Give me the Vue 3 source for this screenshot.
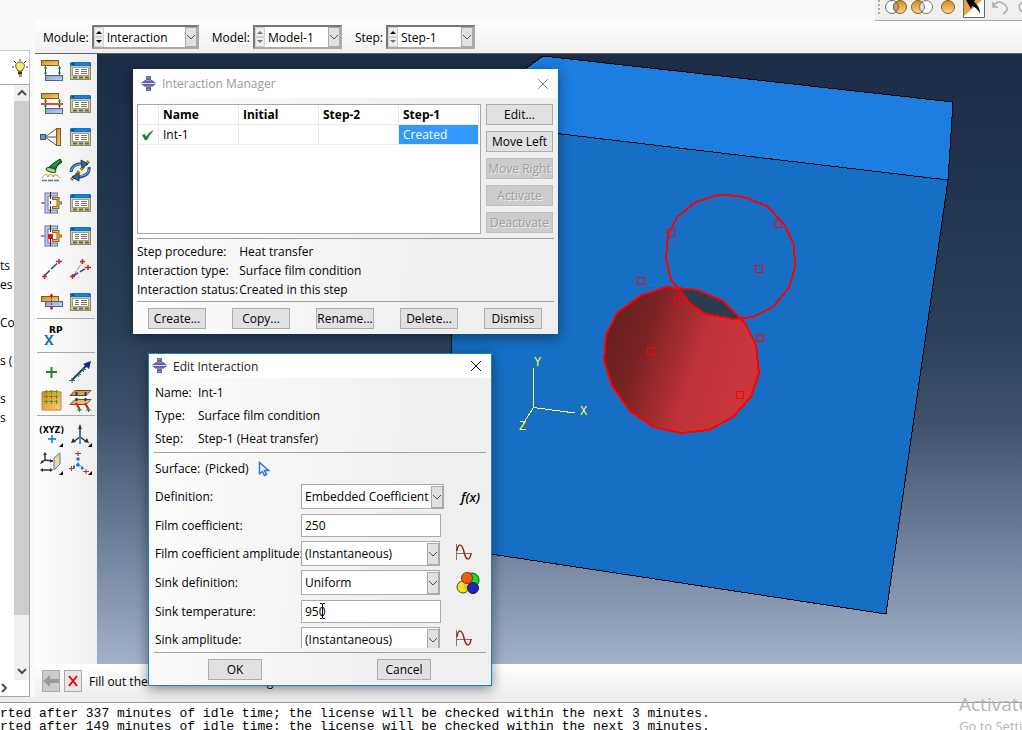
<script setup>
import { ref } from 'vue'

const contexts = [
  { id: 'module', label: 'Module:', value: 'Interaction', size: 'wide', up: true, down: true },
  { id: 'model', label: 'Model:', value: 'Model-1', size: 'slim', up: false, down: false },
  { id: 'step', label: 'Step:', value: 'Step-1', size: 'slim', up: true, down: false }
]

const tree = ['', '', '', '', '', '', '', '', '', 'ts', 'es', '', 'Co', '', 's (', '', 's', 's']

const toolGroups = [
  {
    size: 'tall',
    tools: [
      ['interaction', 'Create Interaction'], ['table', 'Interaction Manager'],
      ['property', 'Create Interaction Property'], ['table', 'Interaction Property Manager'],
      ['constraint', 'Create Constraint'], ['table', 'Constraint Manager'],
      ['contact', 'Find Contact Pairs'], ['cycle', 'Contact Controls'],
      ['connector', 'Create Connector Section'], ['table', 'Connector Section Manager'],
      ['assign', 'Create Connector Assignment'], ['table', 'Connector Assignment Manager'],
      ['wire', 'Create Wire Feature'], ['wires', 'Modify Feature'],
      ['fastener', 'Create Fasteners'], ['table', 'Fastener Manager']
    ]
  },
  { size: 'single', tools: [['rp', 'Create Reference Point']] },
  {
    size: 'short',
    tools: [
      ['plus', 'Create Attachment Points'], ['along', 'Attachment Points Along Direction'],
      ['pattern', 'Attachment Points Pattern'], ['project', 'Project Points']
    ]
  },
  {
    size: 'short',
    tools: [
      ['xyz', 'Create Datum Point'], ['csys', 'Create Datum CSYS'],
      ['plane', 'Create Datum Plane'], ['points', 'Create Datum Axis']
    ]
  }
]

const sideButtons = [
  ['Edit...', false], ['Move Left', false], ['Move Right', true], ['Activate', true], ['Deactivate', true]
]
const facts = [
  ['Step procedure:', 'Heat transfer'],
  ['Interaction type:', 'Surface film condition'],
  ['Interaction status:', 'Created in this step']
]
const managerActions = ['Create...', 'Copy...', 'Rename...', 'Delete...', 'Dismiss']

const summary = [
  ['Name:', 'Int-1'], ['Type:', 'Surface film condition'], ['Step:', 'Step-1 (Heat transfer)']
]
const fields = ref([
  { id: 'definition', label: 'Definition:', kind: 'select', value: 'Embedded Coefficient', icon: 'fx', hint: 'Create expression field' },
  { id: 'film', label: 'Film coefficient:', kind: 'text', value: '250' },
  { id: 'filmamp', label: 'Film coefficient amplitude:', kind: 'select', value: '(Instantaneous)', icon: 'wave', hint: 'Create amplitude' },
  { id: 'sinkdef', label: 'Sink definition:', kind: 'select', value: 'Uniform', icon: 'spheres', hint: 'Create analytical field' },
  { id: 'sinktemp', label: 'Sink temperature:', kind: 'text', value: '950', cursor: true },
  { id: 'sinkamp', label: 'Sink amplitude:', kind: 'select', value: '(Instantaneous)', icon: 'wave', hint: 'Create amplitude' }
])

const handles = [[671, 233], [778, 224], [759, 269], [641, 281], [678, 301], [651, 351], [760, 338], [740, 395]]
const messages = [
  'rted after 337 minutes of idle time; the license will be checked within the next 3 minutes.',
  'rted after 149 minutes of idle time; the license will be checked within the next 3 minutes.'
]
</script>

<template>
  <div class="app">
    <svg class="defs" aria-hidden="true">
      <defs>
        <linearGradient id="orange" x1="0" y1="0" x2="1" y2="1">
          <stop offset="0" stop-color="#d98412" /><stop offset="1" stop-color="#fbd083" />
        </linearGradient>
        <linearGradient id="ball" x1="0" y1="0" x2="0" y2="1">
          <stop offset="0" stop-color="#d98717" /><stop offset="1" stop-color="#ffd58c" />
        </linearGradient>
        <linearGradient id="steel" x1="0" y1="0" x2="1" y2="1">
          <stop offset="0" stop-color="#7f9fd8" /><stop offset="1" stop-color="#c8d6f3" />
        </linearGradient>
      </defs>
      <symbol id="chevron" viewBox="0 0 10 22">
        <path d="M1 9l4 4 4-4" fill="none" stroke="#505050" />
      </symbol>
      <symbol id="logo" viewBox="0 0 16 16">
        <path d="M5 0h5v4h1l4 3H0l4-3h1zM0 8h15l-4 3h-1v4H5v-4H4z" fill="#66669f" />
        <path d="M6 1.500h3M5 4.500h5M4 10.500h7M6 13.500h3" stroke="#9292bd" />
        <path d="M0 7.500h15" stroke="#dadaea" />
      </symbol>
      <symbol id="table" viewBox="0 0 24 24">
        <rect x="2.500" y="6.500" width="20" height="14" fill="#cfcaa2" stroke="#8c8860" />
        <path d="M2 7V4l1-1h19l1 1v3z" fill="#0874d0" />
        <path d="M4 5h2" stroke="#0b315c" /><path d="M7 5h14" stroke="#2a8ee6" />
        <rect x="4.500" y="8.500" width="16" height="8" fill="#fff" stroke="#a5a17d" />
        <path d="M7 10.500h4M13 10.500h6M7 12.500h4M13 12.500h6M7 14.500h4M13 14.500h6" stroke="#777" />
        <path d="M5 18.500h4M11 18.500h4M17 18.500h4" stroke="#6a6540" stroke-width="2" />
      </symbol>
      <symbol id="interaction" viewBox="0 0 24 24">
        <path d="M6.500 7v10M20.500 7v10" stroke="#333" />
        <path d="M5 9h3M5 14h3M19 9h3M19 14h3M6.500 7v3M6.500 13v3M20.500 7v3M20.500 13v3" stroke="#16821f" />
        <rect x="2.500" y="1.500" width="17" height="5" fill="url(#orange)" stroke="#7a5a2c" />
        <rect x="6.500" y="16.500" width="17" height="5" fill="url(#steel)" stroke="#55617e" />
      </symbol>
      <symbol id="property" viewBox="0 0 24 24">
        <use href="#interaction" />
        <path d="M2 12h22" stroke="#e2492f" stroke-width="2" />
      </symbol>
      <symbol id="constraint" viewBox="0 0 24 24">
        <path d="M17 4L6 12l11 8M6 12h11" fill="none" stroke="#555" />
        <rect x="1.500" y="9.500" width="5" height="5" fill="#6f91d0" stroke="#3d5280" />
        <rect x="17.500" y="3.500" width="4" height="17" fill="url(#orange)" stroke="#7a5a2c" />
      </symbol>
      <symbol id="contact" viewBox="0 0 24 24">
        <path d="M15 5l6-4 2 3-5 4-2 5-7-3z" fill="#168028" stroke="#0b3b17" />
        <path d="M14 8l6-5" stroke="#5cb95c" />
        <ellipse cx="12" cy="12" rx="5" ry="2" fill="#a9dc95" stroke="#124d1c" transform="rotate(15 12 12)" />
        <path d="M3 20q4-7 7-1M8 19q4-5 7 0M13 19q4-5 8 1" fill="none" stroke="#e89314" />
        <path d="M3 22.500h18" fill="none" stroke="#2588ca" stroke-width="1.500" stroke-dasharray="5 1" />
      </symbol>
      <symbol id="cycle" viewBox="0 0 24 24">
        <path d="M3 22L22 2" stroke="#946a14" stroke-width="3" stroke-dasharray="5 2" />
        <path d="M3 22L22 2" stroke="#f0bd4b" stroke-dasharray="5 2" />
        <path d="M3 14C3 9 8 5 15 6M21 9c1 6-4 10-11 10" fill="none" stroke="#2b568b" stroke-width="3" />
        <path d="M3 13C4 9 9 6 14 6M21 11c0 4-4 7-9 7" fill="none" stroke="#91b5d8" />
        <path d="M13 2l7 4-6 4zM11 15l-7 4 7 4z" fill="#3a679b" stroke="#1c3963" />
      </symbol>
      <symbol id="connector" viewBox="0 0 24 24">
        <path d="M19 3.500H7.500v17H19" fill="none" stroke="#65759b" stroke-width="4" />
        <path d="M18 3.500H7.500v17H18" fill="none" stroke="#bccdf0" stroke-width="2" />
        <path d="M2 12h4" stroke="#7b8cb5" stroke-width="2" />
        <path d="M13 7.500h6v9h-6M19 12h4" fill="none" stroke="#94661f" stroke-width="3" />
        <path d="M14 7.500h5v9h-5M19 12h3" fill="none" stroke="#f5b95c" />
        <path d="M11.500 1v22" stroke="#333" stroke-dasharray="7 2 3 2" />
      </symbol>
      <symbol id="assign" viewBox="0 0 24 24">
        <use href="#connector" /><path d="M9 10h5v5H9z" fill="#e01616" />
      </symbol>
      <symbol id="wire" viewBox="0 0 24 24">
        <path d="M5 19L20 4.500" stroke="#36369b" stroke-width="1.500" stroke-dasharray="8 2" />
        <path d="M3 19.500h5M5.500 17v5M17 4.500h6M20 2v5" stroke="#d52222" stroke-width="1.500" />
      </symbol>
      <symbol id="wires" viewBox="0 0 24 24">
        <path d="M5 19l9.500-14" stroke="#8a8ad0" stroke-dasharray="6 1" /><path d="M5 19l15-9" stroke="#36369b" stroke-width="1.500" stroke-dasharray="6 2" />
        <path d="M2 19.500h5M4.500 17v5M12 4.500h5M14.500 2v5M17 10.500h6M20 8v5" stroke="#d52222" stroke-width="1.500" />
      </symbol>
      <symbol id="fastener" viewBox="0 0 24 24">
        <rect x="2.500" y="6.500" width="17" height="5" fill="url(#orange)" stroke="#7a5a2c" />
        <rect x="6.500" y="11.500" width="17" height="5" fill="url(#steel)" stroke="#55617e" />
        <path d="M12.500 4v15" stroke="#c51c16" stroke-dasharray="2 1" />
        <circle cx="12.500" cy="5.500" r="1.500" fill="#e11" /><circle cx="12.500" cy="18" r="1.500" fill="#e11" />
      </symbol>
      <symbol id="rp" viewBox="0 0 24 24">
        <path d="M7 12l6 8M13 12l-6 8" stroke="#0870d5" stroke-width="2" />
        <path d="M5.500 11.500h3M11.500 11.500h3M5.500 20.500h3M11.500 20.500h3" stroke="#0870d5" />
      </symbol>
      <symbol id="plus" viewBox="0 0 24 24">
        <path d="M7 12h11M12.500 7v11" stroke="#188b20" stroke-width="2" />
      </symbol>
      <symbol id="along" viewBox="0 0 24 24">
        <path d="M4 20L20 4" stroke="#17309d" stroke-width="2" />
        <path d="M23 1l-2 8-6-5z" fill="#0b2795" />
        <path d="M1 20.500h6M4 18v5M8 14.500h5M10.500 12v5M13 9.500h5M15.500 7v5" stroke="#168c23" />
      </symbol>
      <symbol id="pattern" viewBox="0 0 24 24">
        <path d="M3 4q9-2 19 0v18H3z" fill="url(#orange)" stroke="#bd8430" />
        <path d="M5 3.500h4M10 3.500h4M15 3.500h4M5 8.500h4M10 8.500h4M15 8.500h4M5 13.500h4M10 13.500h4M15 13.500h4M7.500 2v4M12.500 2v4M17.500 2v4M7.500 7v4M12.500 7v4M17.500 7v4M7.500 12v4M12.500 12v4M17.500 12v4" stroke="#4f9a1c" />
      </symbol>
      <symbol id="project" viewBox="0 0 24 24">
        <path d="M7 2.500h16l-5 5H2zM7 11.500h16l-5 5H2z" fill="url(#orange)" stroke="#615032" />
        <path d="M8.500 4v9M17.500 4v9" stroke="#16309b" stroke-width="2" stroke-dasharray="4 2" />
        <path d="M8 15l4 7M17 15l4 7" stroke="#d91818" stroke-width="2" />
        <path d="M9 22h5M11.500 20v4M18 22h5M20.500 20v4" stroke="#168c23" />
      </symbol>
      <symbol id="xyz" viewBox="0 0 24 24">
        <path d="M9 16h8M13 12v8" stroke="#0874d8" stroke-width="1.500" />
        <path d="M24 20v4h-4z" />
      </symbol>
      <symbol id="csys" viewBox="0 0 24 24">
        <path d="M12 3v12M12 14l-7 5M12 14l7 5" stroke="#333" stroke-width="1.500" />
        <path d="M12 4v17" stroke="#237dc1" stroke-width="1.500" />
        <path d="M12 1l2 5h-4zM3 20l2-5 3 4zM21 20l-2-5-3 4z" fill="#333" />
        <path d="M24 20v4h-4z" />
      </symbol>
      <symbol id="plane" viewBox="0 0 24 24">
        <path d="M6 3v6l8 1M6 9l-4 3M3 19h10" fill="none" stroke="#333" stroke-width="1.500" />
        <path d="M6 1l2 3H4zM14 10l-3-2v4zM1 13l2-4 2 2zM1 19l3-2v4zM14 19l-3-2v4z" fill="#333" />
        <path d="M15 7l6-5v11l-6 6z" fill="#ffd78c" stroke="#347fbb" />
        <path d="M24 20v4h-4z" />
      </symbol>
      <symbol id="points" viewBox="0 0 24 24">
        <path d="M10 3v10l8 6M10 13l-6 4" fill="none" stroke="#4a8fcb" stroke-dasharray="2 2" />
        <path d="M7 2.500h6M10 0v5M1 17.500h5M3.500 15v5M15 20.500h6M18 18v5" stroke="#d42222" />
        <path d="M8.500 8h3M8.500 14h3M5 16h2M13 17h2" stroke="#0870d5" stroke-width="3" />
        <path d="M24 20v4h-4z" />
      </symbol>
      <symbol id="wave" viewBox="0 0 20 20">
        <path d="M2.500 2v16M2 11.500h16" stroke="#777" />
        <path d="M3 9C4 1 8 1 10 10s6 9 7 1" fill="none" stroke="#a61f26" stroke-width="1.500" />
      </symbol>
      <symbol id="spheres" viewBox="0 0 24 24">
        <circle cx="16" cy="9" r="7" fill="#14dc2a" stroke="#173f18" />
        <circle cx="7" cy="16" r="6" fill="#eee32b" stroke="#4e4a17" />
        <path d="M7 11h8v9H9z" fill="#d8cd28" />
        <circle cx="11" cy="7" r="5.500" fill="#f15c10" stroke="#793513" />
        <circle cx="17" cy="17" r="5.500" fill="#2028b5" stroke="#17194c" />
      </symbol>
    </svg>

    <div class="workspace">
      <aside class="model-tree">
        <div class="tip">
          <button type="button" aria-label="Show tips">
            <svg width="16" height="18" viewBox="0 0 16 18">
              <path d="M8 0v2M2 2l2 2M14 2l-2 2M0 8h2M14 8h2" stroke="#333" />
              <path d="M8 3C3 3 3 8 5 10l1 2h4l1-2c3-3 1-7-3-7z" fill="#ffe879" stroke="#5e5718" />
              <path d="M6 12.500h4v3H6z" fill="#353b1c" /><path d="M7 17h3" stroke="#222" />
            </svg>
          </button>
        </div>
        <div class="tree-body">
          <ul><li v-for="(item, i) in tree" :key="i">{{ item }}</li></ul>
          <div class="scroll">
            <svg viewBox="0 0 15 16"><path d="M4 10l4-4 4 4" fill="none" stroke="#505050" stroke-width="2" /></svg>
            <div class="thumb"></div><div class="track"></div>
            <svg viewBox="0 0 15 16"><path d="M4 5l4 4 4-4" fill="none" stroke="#505050" stroke-width="2" /></svg>
          </div>
        </div>
        <div class="tree-foot">
          <svg width="12" height="16" viewBox="0 0 12 16"><path d="M2 4l4 4-4 4" fill="none" stroke="#505050" stroke-width="2" /></svg>
        </div>
      </aside>

      <main>
        <div class="top-strip">
          <div class="display-tools">
            <svg class="grip" width="5" height="20" viewBox="0 0 5 20"><path d="M2 0v14" stroke="#aaa" stroke-width="2" stroke-dasharray="2 2" /></svg>
            <button type="button" aria-label="Remove selected">
              <svg width="24" height="20" viewBox="0 0 24 20">
                <circle cx="8" cy="7" r="6.500" fill="#fff" stroke="#666" /><circle cx="16" cy="7" r="6.500" fill="url(#ball)" stroke="#776140" />
                <path d="M12 2q5 5 0 10q-5-5 0-10" fill="#cda050" stroke="#666" />
              </svg>
            </button>
            <button type="button" aria-label="Replace selected">
              <svg width="24" height="20" viewBox="0 0 24 20">
                <circle cx="8" cy="7" r="6.500" fill="url(#ball)" stroke="#776140" /><circle cx="16" cy="7" r="6.500" fill="#fff" stroke="#777" />
                <path d="M12 2q5 5 0 10q-5-5 0-10" fill="#e2e2e2" stroke="#777" />
              </svg>
            </button>
            <button type="button" aria-label="Replace all">
              <svg width="24" height="20" viewBox="0 0 24 20"><circle cx="12" cy="7" r="6.500" fill="url(#ball)" stroke="#776140" /></svg>
            </button>
            <button type="button" aria-label="Undo display change">
              <svg width="24" height="20" viewBox="0 0 24 20">
                <path d="M1 0h22v18H1z" fill="#fff" /><path d="M1 0h19L1 17z" fill="#e7a243" />
                <path d="M1.500 0v17.500h21V0" fill="none" stroke="#666" />
                <path d="M4 0h9l-1 2q6 4 6 12-3-7-8-8l-1 3z" />
              </svg>
            </button>
            <button type="button" aria-label="Undo">
              <svg width="24" height="20" viewBox="0 0 24 20"><path d="M5 2v5h5M5 7q4-8 11-3t-1 10" fill="none" stroke="#aaa" stroke-width="1.500" /></svg>
            </button>
            <button type="button" aria-label="Redo">
              <svg width="24" height="20" viewBox="0 0 24 20"><path d="M12 1Q3 3 6 10l4 4" fill="none" stroke="#aaa" stroke-width="1.500" /></svg>
            </button>
          </div>
        </div>

        <div class="context">
          <div v-for="c in contexts" :key="c.id" class="context-item">
            <label :for="c.id">{{ c.label }}</label>
            <div class="combo context-combo" :class="c.size">
              <svg class="spin" width="10" height="20" viewBox="0 0 10 20">
                <path d="M.500.500h9v9h-9zM.500 10.500h9v9h-9z" fill="#eee" stroke="#d0d0d0" />
                <path d="M5 4L2 7h6z" :fill="c.up ? '#000' : '#777'" /><path d="M5 16l-3-3h6z" :fill="c.down ? '#000' : '#777'" />
              </svg>
              <select :id="c.id"><option>{{ c.value }}</option></select>
              <span class="arrow"><svg width="10" height="22"><use href="#chevron" /></svg></span>
            </div>
          </div>
        </div>

        <div class="stage">
          <nav class="toolbox" aria-label="Toolbox">
            <div v-for="(group, g) in toolGroups" :key="g" class="group" :class="group.size">
              <button v-for="(tool, t) in group.tools" :key="t" type="button" :aria-label="tool[1]" :title="tool[1]">
                <svg width="24" height="24"><use :href="'#' + tool[0]" /></svg>
                <span v-if="tool[0] === 'rp'" class="rp-text">RP</span>
                <span v-if="tool[0] === 'xyz'" class="xyz-text">(XYZ)</span>
              </button>
            </div>
          </nav>
          <div class="viewport">
            <svg viewBox="97 54 925 610" preserveAspectRatio="xMinYMin slice" role="img" aria-label="Part with picked surface">
              <defs>
                <linearGradient id="hole" gradientUnits="userSpaceOnUse" x1="610" y1="335" x2="740" y2="380">
                  <stop offset="0" stop-color="#692022" /><stop offset=".25" stop-color="#7b2224" />
                  <stop offset=".65" stop-color="#be3238" /><stop offset="1" stop-color="#c9363b" />
                </linearGradient>
              </defs>
              <path d="M543 56L953 102L948 180L452 121z" fill="#1b7ee0" stroke="#000" />
              <path d="M452 121L948 180L886 614L451 548z" fill="#166fc4" stroke="#000" />
              <path d="M666 287L698 290L723 301L745 323L756 345L759 373L751 397L733 417L709 430L681 433L654 427L630 411L612 386L604 360L606 335L617 313L640 296z" fill="url(#hole)" />
              <path d="M677 288L698 290L723 301L738 318L733 319L705 314L690 303z" fill="#293d52" />
              <g fill="none" stroke="#f00" stroke-width="2">
                <path d="M666 287L698 290L723 301L745 323L756 345L759 373L751 397L733 417L709 430L681 433L654 427L630 411L612 386L604 360L606 335L617 313L640 296z" />
                <path d="M718 195L727 195L744 197L767 206L784 224L794 245L795 267L789 288L773 307L753 317L733 319L705 314L690 303L677 287L671 280L666 259L668 235L677 217L696 202z" />
              </g>
              <path v-for="(h, i) in handles" :key="i" :d="`M${h[0] - 3.5} ${h[1] - 3.5}h7v7h-7z`" fill="none" stroke="#f00" />
              <path d="M533.500 368v39.500L575 413M533.500 407.500L523 424" fill="none" stroke="#ffff70" />
              <g class="triad"><text x="534" y="366">Y</text><text x="580" y="415">X</text><text x="519" y="430">Z</text></g>
            </svg>
          </div>
        </div>

        <div class="prompt">
          <button type="button" class="back" disabled aria-label="Previous">
            <svg width="16" height="16" viewBox="0 0 16 16"><path d="M0 8l7-6v4h9v4H7v4z" fill="#9a9a9a" /></svg>
          </button>
          <button type="button" aria-label="Cancel procedure">
            <svg width="14" height="16" viewBox="0 0 14 16"><path d="M3 3l8 10M11 3L3 13" stroke="#f00000" stroke-width="2" /></svg>
          </button>
          <span>Fill out the Edit Interaction dialog</span>
        </div>
      </main>
    </div>

    <section class="messages"><p v-for="m in messages" :key="m">{{ m }}</p></section>

    <section class="dialog manager" role="dialog" aria-label="Interaction Manager">
      <header>
        <svg width="16" height="16"><use href="#logo" /></svg>
        <h2>Interaction Manager</h2>
        <button type="button" aria-label="Close"><svg width="12" height="12" viewBox="0 0 12 12"><path d="M1 1l10 10M11 1L1 11" stroke="#888" /></svg></button>
      </header>
      <div class="manager-main">
        <div class="list">
          <table>
            <thead><tr><th class="mark"></th><th>Name</th><th>Initial</th><th>Step-2</th><th>Step-1</th></tr></thead>
            <tbody>
              <tr>
                <td class="mark"><svg width="14" height="12" viewBox="0 0 14 12"><path d="M1 6l3-1 1 3q3-5 8-7-4 4-7 10H4z" fill="#078a13" /></svg></td>
                <td>Int-1</td><td></td><td></td><td class="picked">Created</td>
              </tr>
            </tbody>
          </table>
        </div>
        <div class="side">
          <button v-for="b in sideButtons" :key="b[0]" type="button" class="push" :disabled="b[1]">{{ b[0] }}</button>
        </div>
      </div>
      <dl class="facts">
        <template v-for="f in facts" :key="f[0]"><dt>{{ f[0] }}</dt><dd>{{ f[1] }}</dd></template>
      </dl>
      <footer><button v-for="a in managerActions" :key="a" type="button" class="push">{{ a }}</button></footer>
    </section>

    <section class="dialog editor" role="dialog" aria-label="Edit Interaction">
      <header>
        <svg width="16" height="16"><use href="#logo" /></svg>
        <h2>Edit Interaction</h2>
        <button type="button" aria-label="Close"><svg width="12" height="12" viewBox="0 0 12 12"><path d="M1 1l10 10M11 1L1 11" stroke="#111" /></svg></button>
      </header>
      <dl class="summary">
        <template v-for="s in summary" :key="s[0]"><dt>{{ s[0] }}</dt><dd>{{ s[1] }}</dd></template>
      </dl>
      <div class="surface">
        <span>Surface:</span><span>(Picked)</span>
        <button type="button" aria-label="Edit region">
          <svg width="12" height="16" viewBox="0 0 12 16"><path d="M1.500 1.500v11l3-2 2 4 2-1-2-4h4z" fill="#fff" stroke="#2b6ff0" stroke-width="1.500" /></svg>
        </button>
      </div>
      <form class="fields" @submit.prevent>
        <div v-for="f in fields" :key="f.id" class="field" :class="f.kind">
          <label :for="f.id">{{ f.label }}</label>
          <div v-if="f.kind === 'select'" class="combo" :class="{ broad: f.id === 'definition' }">
            <select :id="f.id"><option>{{ f.value }}</option></select>
            <span class="arrow"><svg width="10" height="22"><use href="#chevron" /></svg></span>
          </div>
          <div v-else class="entry">
            <input :id="f.id" v-model="f.value" type="text">
            <svg v-if="f.cursor" class="caret" width="7" height="16" viewBox="0 0 7 16"><path d="M1 .500h2l.500 1 .500-1h2M3.500 1v14M1 15.500h2l.500-1 .500 1h2" fill="none" stroke="#000" /></svg>
          </div>
          <button v-if="f.icon" type="button" class="helper" :aria-label="f.hint">
            <span v-if="f.icon === 'fx'">f(x)</span>
            <svg v-else :class="f.icon"><use :href="'#' + f.icon" /></svg>
          </button>
        </div>
      </form>
      <footer><button type="button" class="push">OK</button><button type="button" class="push">Cancel</button></footer>
    </section>

    <div class="watermark"><strong>Activate Windows</strong><span>Go to Settings to activate Windows.</span></div>
  </div>
</template>

<style>
body { margin: 0; overflow: hidden; }
</style>

<style scoped>
* { box-sizing: border-box; }
.app {
  position: relative; display: flex; flex-direction: column; height: 100vh; overflow: hidden;
  background: #f4f4f4; color: #000; font: 12px/19px "Open Sans", "Noto Sans", sans-serif;
}
.defs { position: absolute; width: 0; height: 0; }
button { display: flex; align-items: center; justify-content: center; margin: 0; padding: 0; border: 0; background: none; color: inherit; font: inherit; }
input, select { min-width: 0; margin: 0; border: 0; border-radius: 0; outline: 0; background: #fff; color: #000; font: inherit; }
select { flex: 1; height: 100%; padding: 0 0 0 3px; appearance: none; }
h2, p, ul, dl, dd { margin: 0; padding: 0; }
h2 { font: inherit; }

.workspace { flex: 1; min-height: 0; display: grid; grid-template-columns: 35px 1fr; }
.model-tree { display: flex; flex-direction: column; min-height: 0; padding: 50px 5px 0 0; background: #fafafa; }
.tip { display: flex; justify-content: flex-end; height: 34px; flex: none; border: solid #c8c8c8; border-width: 1px 1px 0 0; background: #fff; }
.tip button { width: 18px; }
.tree-body { flex: 1; min-height: 0; display: flex; justify-content: space-between; border: solid #a5a8ae; border-width: 1px 1px 0 0; background: #fff; overflow: hidden; }
ul { flex: 1; list-style: none; white-space: nowrap; }
li { width: 14px; height: 19px; }
.scroll { position: relative; width: 15px; display: flex; flex-direction: column; background: #f0f0f0; }
.scroll svg { flex: none; height: 16px; }
.thumb { flex: 21; background: #cdcdcd; }
.track { flex: 2; }
.tree-foot { flex: none; display: flex; align-items: center; height: 17px; border: solid #a5a8ae; border-width: 0 1px 1px 0; background: #fff; }

main { min-width: 0; display: flex; flex-direction: column; }
.top-strip { height: 21px; flex: none; display: flex; justify-content: flex-end; background: #fafafa; }
.display-tools { width: 147px; display: flex; padding-left: 2px; overflow: hidden; border-bottom: 1px solid #aaa; background: #f0f0f0; }
.display-tools > * { flex: none; }
.display-tools button { width: 26px; justify-content: flex-start; }
.grip { margin-right: 2px; }
.context { height: 33px; flex: none; display: flex; align-items: center; gap: 13px; padding: 0 8px; border-bottom: 1px solid #666; background: linear-gradient(#fff, #efefef); }
.context-item { display: flex; align-items: center; gap: 3px; }
.combo { display: flex; align-items: center; width: 139px; height: 25px; border: 1px solid #a9a9ae; background: #fff; }
.combo.broad { width: 143px; }
.context-combo { height: 24px; border: 2px solid #aaa; border-top-color: #777; border-left-color: #777; }
.combo.wide { width: 107px; }
.combo.slim { width: 89px; }
.spin { flex: none; }
.arrow { flex: none; display: flex; width: 12px; height: 22px; border: 1px solid #aaa; background: #e1e1e1; overflow: hidden; pointer-events: none; align-items: center; }
.context-combo .arrow { height: 20px; }

.stage { flex: 1; min-height: 0; display: flex; }
.toolbox { flex: none; width: 62px; padding-left: 2px; background: linear-gradient(90deg, #fff, #eee); }
.group { display: grid; grid-template-columns: 28px 28px; column-gap: 1px; margin-right: 2px; border-bottom: 1px solid #aaa; }
.group:last-child { border: 0; }
.group button { position: relative; }
.tall { grid-auto-rows: 33px; }
.single { grid-auto-rows: 33px; }
.short { grid-auto-rows: 28px; padding: 5px 0 1px; }
.rp-text, .xyz-text { position: absolute; top: 5px; left: 12px; font: bold 9px/12px "DejaVu Sans", sans-serif; }
.xyz-text { top: 4px; left: 2px; font-size: 8px; }
.viewport { flex: 1; min-width: 0; background: linear-gradient(#1b2c47 0%, #223550 22%, #2b3f58 45%, #3e506a 60%, #6a7b96 78%, #a2b1c9 100%); }
.viewport svg { display: block; width: 100%; height: 100%; shape-rendering: crispEdges; }
.triad { fill: #ff3; font: 12px "Liberation Mono", monospace; }

.prompt { height: 33px; flex: none; display: flex; align-items: center; gap: 4px; padding: 0 7px; border-top: 1px solid #fff; background: linear-gradient(#fff, #eee); white-space: nowrap; }
.prompt button { width: 18px; height: 22px; border: 1px solid #aaa; background: #e8e8e8; }
.prompt .back { background: #ccc; }
.prompt span { margin-left: 3px; }
.messages { flex: none; height: 33px; padding-top: 5px; overflow: hidden; border-top: 5px solid #eee; background: #fff; box-shadow: inset 0 1px #999; font: 13px/13px "Liberation Mono", monospace; white-space: nowrap; }

.dialog { position: absolute; background: linear-gradient(100deg, #fefefe, #efefef 75%); box-shadow: 0 3px 12px #0007; }
.dialog header { display: flex; align-items: center; gap: 5px; background: #fff; }
.dialog header button { margin-left: auto; width: 16px; height: 20px; }
.push { height: 21px; border: 1px solid #adadad; background: #e1e1e1; white-space: nowrap; }
.push:disabled { border-color: #bfbfbf; background: #ccc; color: #9d9d9d; text-shadow: 1px 1px #eee; }

.manager { left: 133px; top: 69px; width: 425px; padding: 0 4px; }
.manager header { height: 29px; margin: 0 -4px 6px; padding: 0 7px 0 8px; color: #999; }
.manager-main { display: flex; gap: 5px; padding-bottom: 4px; border-bottom: 1px solid #a0a0a0; }
.list { width: 344px; height: 130px; border: 1px solid #a5a8ae; background: #fff; }
table { border-collapse: separate; border-spacing: 0; table-layout: fixed; width: 341px; }
th, td { height: 20px; padding: 0 0 0 4px; border: solid #ebebeb; border-width: 0 1px 1px 0; text-align: left; line-height: 19px; }
.mark { width: 21px; padding: 0 0 0 3px; }
.mark svg { display: block; }
.picked { background: #3399ff; color: #fff; }
.side { display: flex; flex-direction: column; gap: 6px; width: 67px; }
.facts { display: grid; grid-template-columns: auto 1fr; column-gap: 1px; padding: 3px 0 2px; border-bottom: 1px solid #a0a0a0; white-space: nowrap; }
.manager footer { display: flex; justify-content: space-between; padding: 6px 12px 5px 11px; }
.manager footer .push { width: 58px; }

.editor { left: 148px; top: 353px; width: 344px; padding: 0 5px; border: 1px solid #1b7fd8; }
.editor header { height: 24px; margin: 0 -5px 3px; padding: 0 7px 0 3px; color: #222; }
.summary { display: grid; grid-template-columns: 43px 1fr; grid-auto-rows: 23px; align-items: center; padding: 0 1px 2px; border-bottom: 1px solid #a0a0a0; }
.surface { display: flex; align-items: center; gap: 5px; height: 31px; padding-left: 1px; }
.surface button { margin-left: 4px; }
.fields { display: flex; flex-direction: column; gap: 4px; height: 164px; padding-left: 1px; overflow: hidden; }
.field { flex: none; display: flex; align-items: center; height: 25px; }
.field.text { height: 24px; }
.field label { flex: none; width: 146px; white-space: nowrap; }
.entry { position: relative; width: 140px; height: 23px; }
.entry input { width: 100%; height: 100%; padding: 0 3px; border: 1px solid #a9a9ae; }
.caret { position: absolute; left: 18px; top: 3px; }
.helper { margin-left: auto; width: 32px; height: 24px; justify-content: flex-start; }
.helper span { font: italic 600 13px "Open Sans", sans-serif; padding-left: 7px; }
.wave { width: 20px; height: 20px; align-self: flex-start; }
.spheres { width: 24px; height: 24px; margin-left: 2px; }
.editor footer { display: flex; justify-content: space-between; margin-top: 4px; padding: 6px 55px 5px 54px; border-top: 1px solid #a0a0a0; }
.editor footer .push { width: 54px; }

.watermark { position: absolute; right: 0; bottom: 0; width: 63px; height: 38px; display: flex; flex-direction: column; overflow: hidden; white-space: nowrap; color: #b4b4b4; font-size: 13px; line-height: 20px; pointer-events: none; }
.watermark strong { font-weight: 400; font-size: 19px; line-height: 24px; }
</style>
